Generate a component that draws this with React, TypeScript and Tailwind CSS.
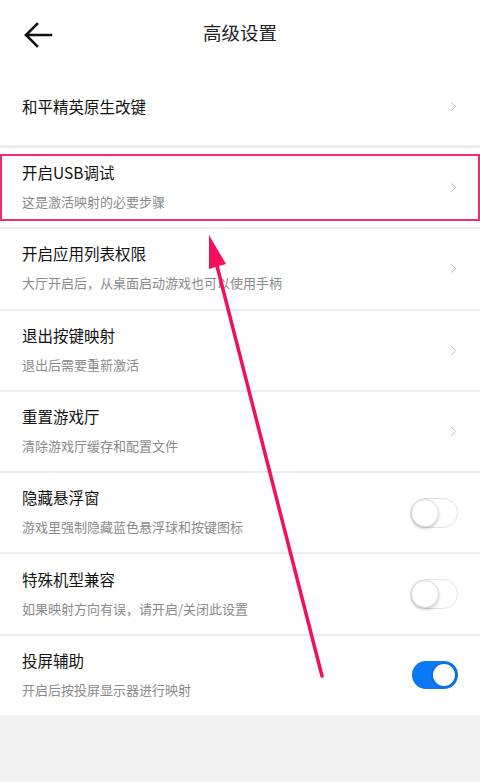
import { ChevronRight } from 'lucide-react'

type Row = {
  title: string
  sub?: string
  kind: 'link' | 'off' | 'on'
}

const rows: Row[] = [
  { title: '开启USB调试', sub: '这是激活映射的必要步骤', kind: 'link' },
  { title: '开启应用列表权限', sub: '大厅开启后，从桌面启动游戏也可以使用手柄', kind: 'link' },
  { title: '退出按键映射', sub: '退出后需要重新激活', kind: 'link' },
  { title: '重置游戏厅', sub: '清除游戏厅缓存和配置文件', kind: 'link' },
  { title: '隐藏悬浮窗', sub: '游戏里强制隐藏蓝色悬浮球和按键图标', kind: 'off' },
  { title: '特殊机型兼容', sub: '如果映射方向有误，请开启/关闭此设置', kind: 'off' },
  { title: '投屏辅助', sub: '开启后按投屏显示器进行映射', kind: 'on' },
]

function Toggle({ on }: { on: boolean }) {
  if (on) {
    return (
      <div className="w-[46px] h-[28px] rounded-full bg-[#0b78f5] flex items-center justify-end pr-[1px]">
        <div className="w-[26px] h-[26px] rounded-full bg-white border-2 border-[#0b6fe0]" />
      </div>
    )
  }
  return (
    <div className="w-[48px] h-[30px] rounded-full bg-white border border-[#e2e2e2] flex items-center">
      <div className="w-[28px] h-[28px] rounded-full bg-white border border-[#dadada] shadow-[0_2px_3px_rgba(0,0,0,0.18)]" />
    </div>
  )
}

export default function App() {
  return (
    <div
      className="relative w-[480px] h-[782px] bg-[#f0f0f0] overflow-hidden"
      style={{ fontFamily: '"Noto Sans CJK SC", "Noto Sans", sans-serif' }}
    >
      {/* Header */}
      <div className="relative h-[68px] bg-white flex items-center justify-center">
        <svg className="absolute left-[22px] top-[21px]" width="32" height="28" viewBox="0 0 32 28" fill="none">
          <path d="M29 14H4M15 3L4 14l11 11" stroke="#111" strokeWidth="2.6" strokeLinecap="square" />
        </svg>
        <span className="text-[18.5px] text-[#222] -mt-[2px]">高级设置</span>
      </div>

      {/* First item */}
      <div className="h-[77px] bg-white flex items-center justify-between pl-[22px] pr-[18px]">
        <span className="text-[15.5px] text-[#111]">和平精英原生改键</span>
        <ChevronRight size={17} strokeWidth={1.1} className="text-[#aaa]" />
      </div>
      <div className="h-[3px] bg-[#ececec]" />

      {/* Items */}
      <div className="flex flex-col gap-[2px] bg-[#ececec]">
        {rows.map((r, i) => (
          <div key={r.title} className="h-[79.3px] bg-white flex items-center">
            <div
              className={
                i === 0
                  ? 'w-full h-[67px] border-2 border-[#ee2d6c] flex items-center justify-between pl-[20px] pr-[16px]'
                  : 'w-full h-full flex items-center justify-between pl-[22px] pr-[22px]'
              }
            >
              <div className="flex flex-col gap-[11px] -mt-[3px]">
                <span className="text-[15.5px] leading-[20px] text-[#111]">{r.title}</span>
                <span className="text-[13px] leading-[17px] text-[#8a8a8a]">{r.sub}</span>
              </div>
              {r.kind === 'link' ? (
                <ChevronRight size={17} strokeWidth={1.1} className={i === 0 ? 'text-[#aaa]' : 'text-[#aaa] -mr-[4px]'} />
              ) : (
                <Toggle on={r.kind === 'on'} />
              )}
            </div>
          </div>
        ))}
      </div>

      {/* Annotation arrow */}
      <svg className="absolute inset-0 pointer-events-none" width="480" height="782" viewBox="0 0 480 782">
        <line x1="322" y1="676" x2="216" y2="262" stroke="#f3105a" strokeWidth="3.5" strokeLinecap="round" />
        <polygon points="209,235 226,264 209,269" fill="#f3105a" />
      </svg>
    </div>
  )
}
